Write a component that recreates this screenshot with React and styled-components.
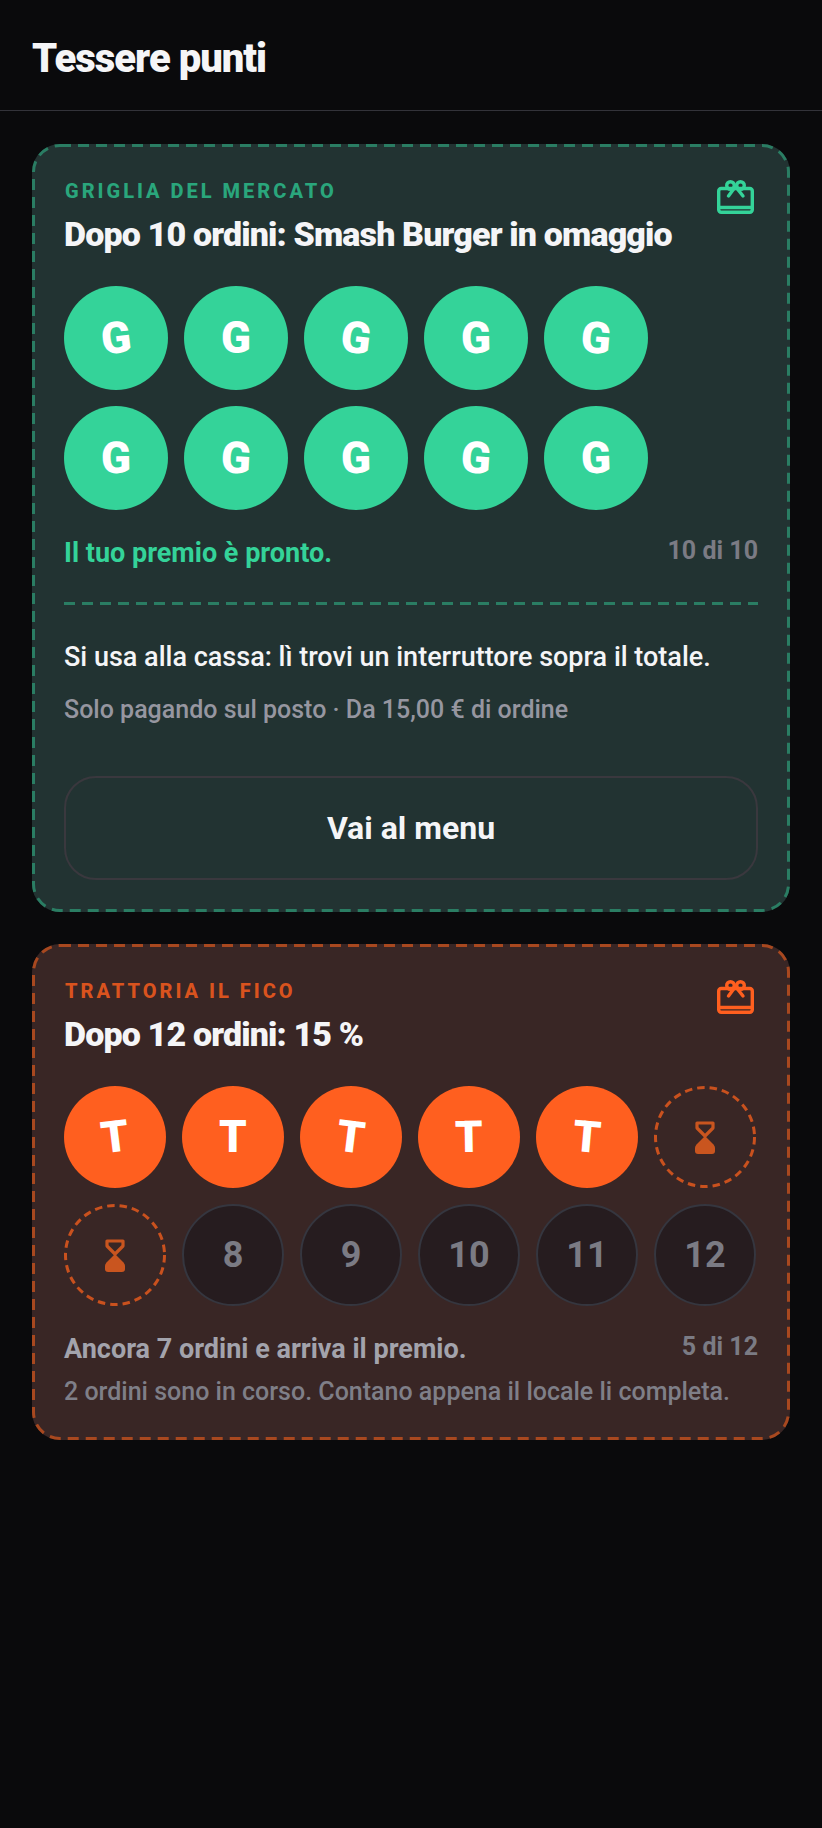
import { createGlobalStyle, styled } from "styled-components";

const GlobalStyle = createGlobalStyle`
  html, body {
    margin: 0;
    padding: 0;
    background: #0a0a0c;
  }
  body {
    font-family: Roboto, "Liberation Sans", sans-serif;
    color: #f5f5f7;
  }
`;

const Page = styled.div`
  min-height: 1828px;
  background: #0a0a0c;
`;

const Header = styled.header`
  height: 111px;
  padding: 7px 32px 0;
  display: flex;
  align-items: center;
  border-bottom: 1px solid #33333a;
  box-sizing: border-box;
`;

const Title = styled.h1`
  margin: 0;
  font-size: 40px;
  font-weight: 900;
  letter-spacing: -0.025em;
  color: #f5f5f7;
`;

const Content = styled.main`
  padding: 33px 32px;
  display: flex;
  flex-direction: column;
  gap: 32px;
`;

const Card = styled.section`
  position: relative;
  border-radius: 28px;
  background: ${(p) => p.$bg};
  padding: 36px 32px 32px;
`;

const Frame = styled.svg`
  position: absolute;
  top: 0;
  left: 0;
  width: 100%;
  height: 100%;
  pointer-events: none;
`;

const FrameLine = styled.rect`
  width: calc(100% - 3px);
  height: calc(100% - 3px);
  fill: none;
  stroke: ${(p) => p.$color};
  stroke-width: 3;
  stroke-dasharray: 11 7;
`;

const GiftSlot = styled.div`
  position: absolute;
  top: 36px;
  right: 36px;
  display: flex;
  color: ${(p) => p.$color};
`;

const Eyebrow = styled.div`
  font-size: 20px;
  line-height: 22px;
  font-weight: 800;
  letter-spacing: 0.15em;
  padding-left: 1px;
  color: ${(p) => p.$color};
`;

const CardTitle = styled.h2`
  margin: 12px 0 0;
  font-size: 34px;
  line-height: 40px;
  font-weight: 900;
  letter-spacing: -0.025em;
  color: #f5f5f7;
`;

const Stamps = styled.div`
  margin-top: 32px;
  display: flex;
  flex-wrap: wrap;
  gap: 16px;
`;

const Stamp = styled.div`
  position: relative;
  width: ${(p) => p.$size}px;
  height: ${(p) => p.$size}px;
  border-radius: 50%;
  box-sizing: border-box;
  display: flex;
  align-items: center;
  justify-content: center;
  background: ${(p) => p.$color};
  color: #fff;
  font-size: 44px;
  font-weight: 900;
`;

const Letter = styled.span`
  display: block;
  transform: rotate(${(p) => p.$tilt}deg);
`;

const PendingStamp = styled(Stamp)`
  background: transparent;
  color: #c9551f;
`;

const Ring = styled.svg`
  position: absolute;
  top: 0;
  left: 0;
`;

const EmptyStamp = styled(Stamp)`
  background: #261c1f;
  border: 2.500px solid #35363f;
  color: #7b7b84;
  font-size: 36px;
  font-weight: 700;
`;

const StatusRow = styled.div`
  margin-top: 27px;
  display: flex;
  justify-content: space-between;
  align-items: flex-start;
`;

const Status = styled.div`
  font-size: 27px;
  line-height: 32px;
  font-weight: 700;
  color: ${(p) => p.$color};
`;

const Count = styled.div`
  font-size: 25px;
  line-height: 28px;
  font-weight: 700;
  color: #7b7b84;
`;

const Note = styled.div`
  margin-top: 11px;
  font-size: 25px;
  line-height: 32px;
  font-weight: 500;
  color: #7f7f88;
`;

const Divider = styled.div`
  height: 3px;
  margin-top: 33px;
  background: repeating-linear-gradient(to right, #2a7d63 0 11px, transparent 11px 18px);
`;

const RedeemText = styled.p`
  margin: 34px 0 0;
  font-size: 27px;
  line-height: 36px;
  font-weight: 500;
  color: #f5f5f7;
`;

const RedeemNote = styled.p`
  margin: 19px 0 0;
  font-size: 25px;
  line-height: 32px;
  font-weight: 500;
  color: #9696a0;
`;

const MenuButton = styled.button`
  display: block;
  width: 100%;
  height: 104px;
  margin-top: 50px;
  background: transparent;
  border: 2px solid #3a383e;
  border-radius: 32px;
  font-family: inherit;
  font-size: 32px;
  font-weight: 700;
  color: #f5f5f7;
`;

const GiftIcon = () => (
  <svg width="37" height="34" viewBox="0 0 37 34" fill="none" stroke="currentColor" strokeWidth="3.400" strokeLinecap="round" strokeLinejoin="round">
    <rect x="1.700" y="8.500" width="33.600" height="23.800" rx="2.500" />
    <path d="M1.700 27.500h33.600" />
    <path d="M18.500 6.500L11.500 16M18.500 6.500L26 16" />
    <circle cx="13.500" cy="5.500" r="3.800" />
    <circle cx="23.500" cy="5.500" r="3.800" />
  </svg>
);

const HourglassIcon = () => (
  <svg width="20" height="33" viewBox="0 0 20 33">
    <path d="M2 2h16v5l-8 8-8-8z" fill="none" stroke="currentColor" strokeWidth="3.200" strokeLinejoin="round" />
    <path d="M10 15l8.500 8.500q1.500 1.500 1.500 3.500v3a3 3 0 0 1-3 3H3a3 3 0 0 1-3-3v-3q0-2 1.500-3.500z" fill="currentColor" />
  </svg>
);

const Pending = () => (
  <PendingStamp $size={102}>
    <Ring width="102" height="102" viewBox="0 0 102 102" fill="none">
      <circle cx="51" cy="51" r="49.500" stroke="#c9511e" strokeWidth="3" strokeDasharray="7.500 5" />
    </Ring>
    <HourglassIcon />
  </PendingStamp>
);

const marketTilts = [-7, 0, 7, -1, 5, -1, 3, -1, 4, -2];
const fichiTilts = [-7, 0, 7, -1, 5];

const App = () => {
  return (
    <Page>
      <GlobalStyle />
      <Header>
        <Title>Tessere punti</Title>
      </Header>
      <Content>
        <Card $bg="#223332">
          <Frame>
            <FrameLine x="1.500" y="1.500" rx="26.500" $color="#2a7d63" />
          </Frame>
          <GiftSlot $color="#34d399">
            <GiftIcon />
          </GiftSlot>
          <Eyebrow $color="#2aa67c">GRIGLIA DEL MERCATO</Eyebrow>
          <CardTitle>Dopo 10 ordini: Smash Burger in omaggio</CardTitle>
          <Stamps>
            {marketTilts.map((tilt, i) => (
              <Stamp key={i} $size={104} $color="#34d399">
                <Letter $tilt={tilt}>G</Letter>
              </Stamp>
            ))}
          </Stamps>
          <StatusRow>
            <Status $color="#34d399">Il tuo premio è pronto.</Status>
            <Count>10 di 10</Count>
          </StatusRow>
          <Divider />
          <RedeemText>Si usa alla cassa: lì trovi un interruttore sopra il totale.</RedeemText>
          <RedeemNote>Solo pagando sul posto · Da 15,00 € di ordine</RedeemNote>
          <MenuButton>Vai al menu</MenuButton>
        </Card>

        <Card $bg="#392625">
          <Frame>
            <FrameLine x="1.500" y="1.500" rx="26.500" $color="#a8481f" />
          </Frame>
          <GiftSlot $color="#ff5f1f">
            <GiftIcon />
          </GiftSlot>
          <Eyebrow $color="#d9531e">TRATTORIA IL FICO</Eyebrow>
          <CardTitle>Dopo 12 ordini: 15 %</CardTitle>
          <Stamps>
            {fichiTilts.map((tilt, i) => (
              <Stamp key={i} $size={102} $color="#ff5f1f">
                <Letter $tilt={tilt}>T</Letter>
              </Stamp>
            ))}
            <Pending />
            <Pending />
            {[8, 9, 10, 11, 12].map((n) => (
              <EmptyStamp key={n} $size={102}>{n}</EmptyStamp>
            ))}
          </Stamps>
          <StatusRow>
            <Status $color="#a3a3ac">Ancora 7 ordini e arriva il premio.</Status>
            <Count>5 di 12</Count>
          </StatusRow>
          <Note>2 ordini sono in corso. Contano appena il locale li completa.</Note>
        </Card>
      </Content>
    </Page>
  );
};

export default App;
